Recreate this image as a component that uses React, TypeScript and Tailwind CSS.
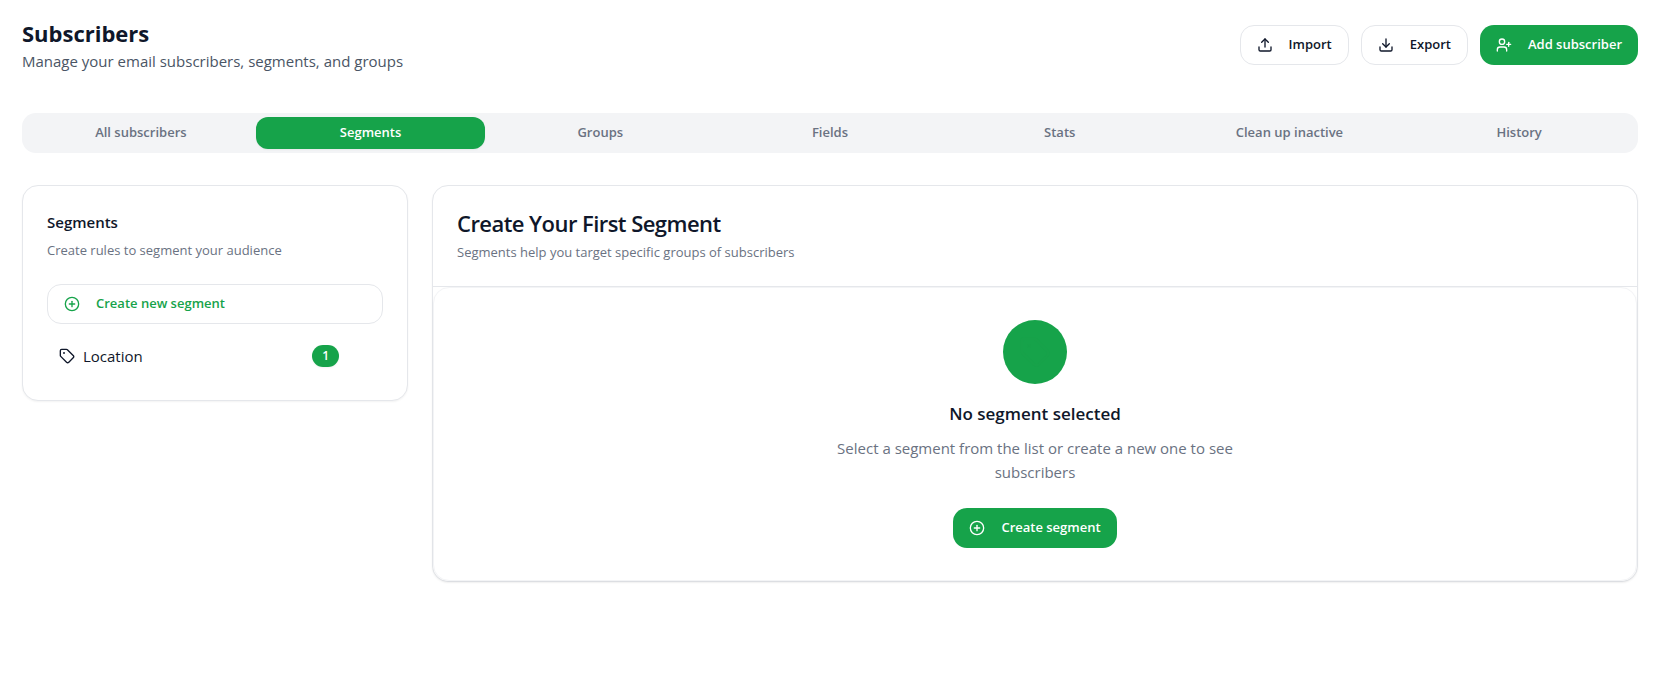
import { CirclePlus, Download, Ellipsis, Tag, Upload, UserPlus } from "lucide-react";

const tabs = [
  "All subscribers",
  "Segments",
  "Groups",
  "Fields",
  "Stats",
  "Clean up inactive",
  "History",
];

const outlineButton =
  "flex h-10 items-center gap-4 rounded-[14px] border border-gray-200 bg-white px-4 text-[13px] font-semibold";
const primaryButton =
  "flex h-10 items-center gap-4 rounded-[14px] bg-[#16a34a] px-4 text-[13px] font-semibold text-white";

const App = () => {
  return (
    <main className="pt-[17px] pr-[17px] pb-8 pl-[22px] font-['Open_Sans',sans-serif] text-[#0f172a]">
      <header className="flex items-center justify-between">
        <div>
          <h1 className="text-[22px] leading-8 font-bold">Subscribers</h1>
          <p className="text-[15px] leading-6 text-gray-600">
            Manage your email subscribers, segments, and groups
          </p>
        </div>
        <div className="flex gap-3">
          <button className={outlineButton}>
            <Upload className="h-4 w-4" />
            Import
          </button>
          <button className={outlineButton}>
            <Download className="h-4 w-4" />
            Export
          </button>
          <button className={primaryButton}>
            <UserPlus className="h-4 w-4" />
            Add subscriber
          </button>
        </div>
      </header>

      <nav className="mt-10 grid h-10 grid-cols-7 rounded-[14px] bg-gray-100 p-1">
        {tabs.map((tab) => (
          <button
            key={tab}
            className={
              tab === "Segments"
                ? "rounded-xl bg-[#16a34a] text-[13px] font-semibold text-white shadow-xs"
                : "rounded-xl text-[13px] font-semibold text-gray-500"
            }
          >
            {tab}
          </button>
        ))}
      </nav>

      <div className="mt-8 grid grid-cols-4 items-start gap-6">
        <section className="rounded-2xl border border-gray-200 bg-white p-6 shadow-xs">
          <h2 className="text-[15px] leading-6 font-semibold">Segments</h2>
          <p className="mt-1.5 text-[13px] leading-5 text-gray-500">
            Create rules to segment your audience
          </p>
          <button className="mt-6 flex h-10 w-full items-center gap-4 rounded-[14px] border border-gray-200 px-4 text-[13px] font-semibold text-[#16a34a]">
            <CirclePlus className="h-4 w-4" />
            Create new segment
          </button>
          <div className="group mt-3 flex h-10 items-center px-3">
            <Tag className="h-4 w-4" />
            <span className="ml-2 text-[15px] leading-6">Location</span>
            <span className="ml-auto rounded-full bg-[#16a34a] px-2.5 py-[3px] text-xs font-semibold text-white shadow-xs">
              1
            </span>
            <button
              aria-label="Segment actions"
              className="flex h-8 w-8 items-center justify-center opacity-0 group-hover:opacity-100"
            >
              <Ellipsis className="h-4 w-4" />
            </button>
          </div>
        </section>

        <section className="col-span-3 rounded-2xl border border-gray-200 bg-white shadow-xs">
          <div className="border-b border-gray-200 p-6">
            <h2 className="text-[22px] leading-[26px] font-semibold tracking-tight">
              Create Your First Segment
            </h2>
            <p className="mt-1.5 text-[13px] leading-5 text-gray-500">
              Segments help you target specific groups of subscribers
            </p>
          </div>
          <div className="flex flex-col items-center rounded-2xl border border-gray-100 py-8 text-center shadow-xs">
            <div className="flex h-16 w-16 items-center justify-center rounded-full bg-[#16a34a]">
              <Tag className="h-8 w-8 text-[#17a24a]" />
            </div>
            <h3 className="mt-4 text-[17px] leading-7 font-semibold">No segment selected</h3>
            <p className="mt-2 max-w-md text-[15px] leading-6 text-gray-500">
              Select a segment from the list or create a new one to see subscribers
            </p>
            <button className={`mt-6 ${primaryButton}`}>
              <CirclePlus className="h-4 w-4" />
              Create segment
            </button>
          </div>
        </section>
      </div>
    </main>
  );
};

export default App;
